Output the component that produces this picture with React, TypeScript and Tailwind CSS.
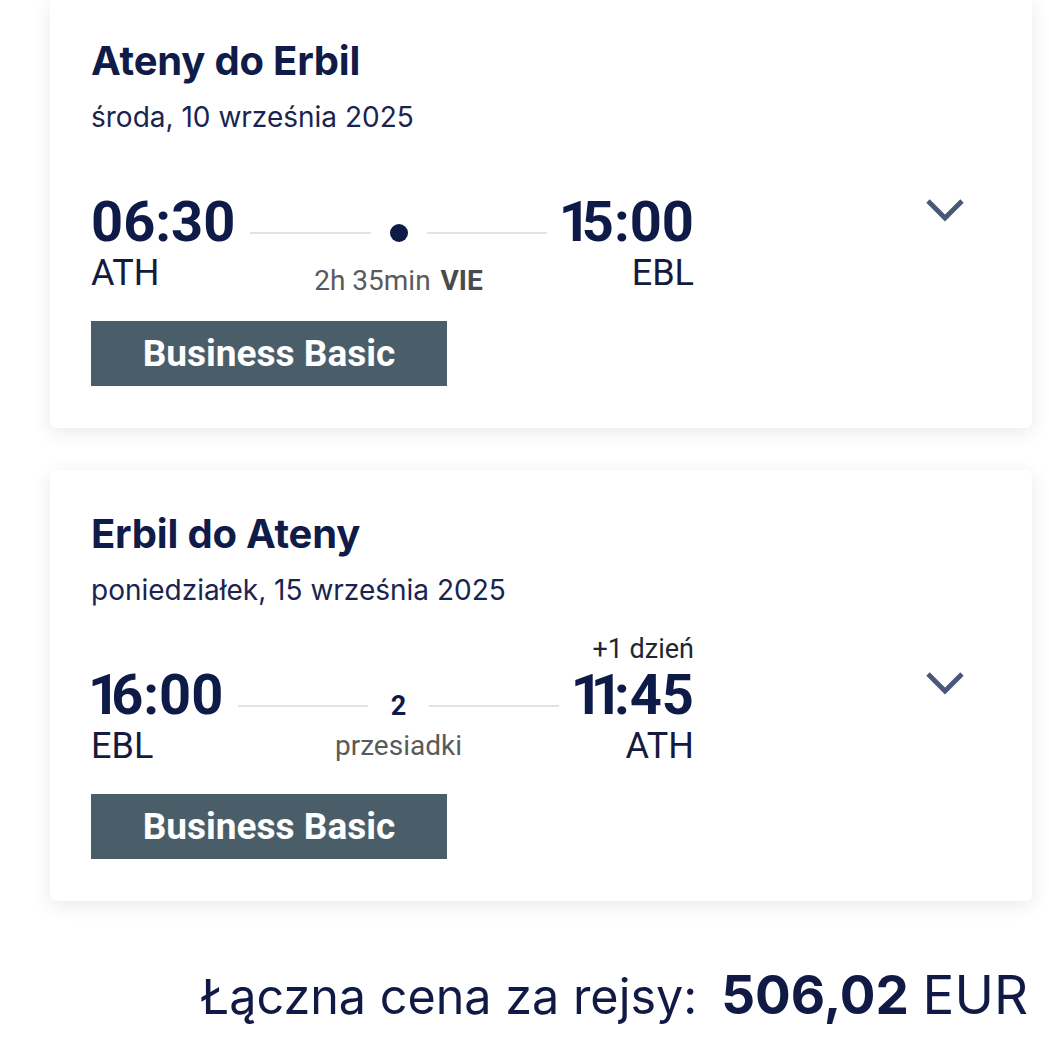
import React from "react";

const Chevron = () => (
  <svg width="40" height="26" viewBox="0 0 40 26" fill="none" className="mt-[3px] shrink-0">
    <polyline points="3,4 20,21 37,4" stroke="#4a5878" strokeWidth="4.8" strokeLinejoin="miter" fill="none" />
  </svg>
);

function Time({ value }: { value: string }) {
  return (
    <div className="text-[56px] leading-[56px] font-bold text-[#0e1a48] whitespace-nowrap">
      {value.split("").map((c, i) =>
        c === "1" ? (
          <span key={i} className="inline-block -ml-[3px] -mr-[9px]">
            1
          </span>
        ) : (
          <span key={i}>{c}</span>
        )
      )}
    </div>
  );
}

type CardProps = {
  first?: boolean;
  title: string;
  date: string;
  dep: string;
  depCode: string;
  arr: string;
  arrCode: string;
  center: React.ReactNode;
  caption: React.ReactNode;
  captionClass: string;
  centerClass: string;
  extra?: string;
};

function Card(p: CardProps) {
  return (
    <div
      className={
        "bg-white shadow-[0_4px_20px_rgba(0,0,0,0.09)] pl-[41px] pr-[67px] pb-[42px] " +
        (p.first ? "rounded-b-md pt-[37px]" : "rounded-md pt-[40px] mt-[42px]")
      }
    >
      <div className="text-[40px] leading-[48px] font-bold text-[#0f1b48] font-['Inter'] tracking-[-0.2px]">
        {p.title}
      </div>
      <div className="mt-[15px] text-[28px] leading-[34px] text-[#1a2450] font-['Inter']">{p.date}</div>
      <div className="mt-[60px] flex items-start justify-between">
        <div>
          <div className="w-[603px] h-[97px] flex items-start gap-[15px] font-['Roboto']">
            <div className="flex flex-col">
              <Time value={p.dep} />
              <div className="mt-[5px] text-[36px] leading-[36px] text-[#141b3d]">{p.depCode}</div>
            </div>
            <div className="flex-1 flex flex-col pt-[23px]">
              <div className="h-[32px] flex items-center">
                <div className="flex-1 h-[2px] bg-[#e2e2e2]" />
                <div className={p.centerClass}>{p.center}</div>
                <div className="flex-1 h-[2px] bg-[#e2e2e2]" />
              </div>
              <div className={p.captionClass}>{p.caption}</div>
            </div>
            <div className="relative flex flex-col items-end">
              {p.extra && (
                <div className="absolute bottom-full right-0 mb-[4px] whitespace-nowrap text-[27px] leading-[28px] text-[#222633]">
                  {p.extra}
                </div>
              )}
              <Time value={p.arr} />
              <div className="mt-[5px] text-[36px] leading-[36px] text-[#141b3d]">{p.arrCode}</div>
            </div>
          </div>
          <div className="mt-[30px] w-[356px] h-[65px] bg-[#4a5e6a] flex items-center justify-center text-white font-['Roboto'] font-bold text-[37px] leading-[40px]">
            Business Basic
          </div>
        </div>
        <Chevron />
      </div>
    </div>
  );
}

export default function App() {
  return (
    <div className="w-[1049px] h-[1052px] bg-white overflow-hidden">
      <div className="w-[982px] ml-[50px]">
        <Card
          first
          title="Ateny do Erbil"
          date="środa, 10 września 2025"
          dep="06:30"
          depCode="ATH"
          arr="15:00"
          arrCode="EBL"
          centerClass="px-[19px] flex items-center"
          center={<div className="w-[18px] h-[18px] rounded-full bg-[#0e1a48]" />}
          captionClass="mt-[16px] text-center text-[28px] leading-[32px] text-[#5a5a5a] whitespace-nowrap"
          caption={
            <>
              2h 35min <span className="ml-[3px] font-bold text-[#4a4a4a]">VIE</span>
            </>
          }
        />
        <Card
          title="Erbil do Ateny"
          date="poniedziałek, 15 września 2025"
          dep="16:00"
          depCode="EBL"
          arr="11:45"
          arrCode="ATH"
          extra="+1 dzień"
          centerClass="px-[23px] text-[27px] leading-[32px] font-bold text-[#0e1a48]"
          center="2"
          captionClass="mt-[8px] text-center text-[28px] leading-[32px] text-[#5a5a5a] whitespace-nowrap"
          caption="przesiadki"
        />
      </div>
      <div className="mt-[65px] pr-[21px] text-right font-['Inter'] text-[48.5px] leading-[58px] text-[#111a44] whitespace-nowrap">
        Łączna cena za rejsy:<span className="ml-[24px] font-bold text-[53px]">506,02</span>{" "}
        <span className="text-[53px]">EUR</span>
      </div>
    </div>
  );
}
